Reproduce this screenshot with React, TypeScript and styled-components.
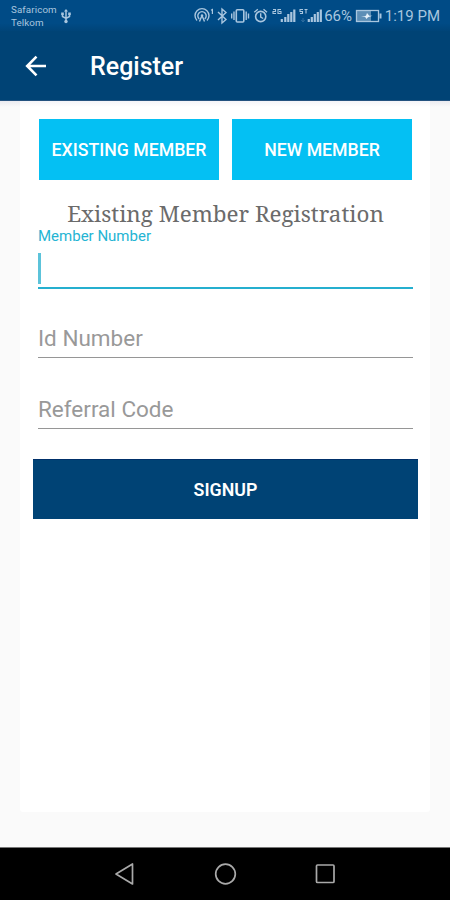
import React from "react";
import styled, { createGlobalStyle } from "styled-components";

const Global = createGlobalStyle`
  * { box-sizing: border-box; }
  body { margin: 0; font-family: Roboto, sans-serif; background: #fafafa; }
  button { border: 0; font-family: inherit; padding: 0; }
`;

const Screen = styled.div`
  width: 450px;
  height: 900px;
  display: flex;
  flex-direction: column;
  background: #fafafa;
  overflow: hidden;
`;

const StatusBar = styled.div`
  height: 31px;
  flex: none;
  display: flex;
  justify-content: space-between;
  padding: 0 10px 0 11px;
  background: linear-gradient(#004b86 75%, #004478);
  color: #a9c6df;
`;

const Carrier = styled.div`
  display: flex;
  align-items: center;
  gap: 4px;
  padding-top: 1px;
`;

const CarrierNames = styled.div`
  font-size: 9.8px;
  line-height: 13px;
  letter-spacing: 0.1px;
  white-space: nowrap;
`;

const Indicators = styled.div`
  display: flex;
  align-items: center;
  height: 32px;
`;

const StatusText = styled.span<{ $width: number }>`
  width: ${(p) => p.$width}px;
  font-size: 15px;
  line-height: 18px;
  white-space: nowrap;
  text-align: right;
`;

const Toolbar = styled.header`
  height: 70px;
  flex: none;
  display: flex;
  align-items: center;
  gap: 41px;
  padding: 0 24px 0 23px;
  background: #004375;
  color: #fff;
  border-bottom: 1px solid #24527f;
`;

const BackIcon = styled.svg`
  width: 26px;
  height: 26px;
`;

const Title = styled.h1`
  margin: 2px 0 0;
  font-size: 25px;
  font-weight: 500;
  line-height: 30px;
`;

const Body = styled.main`
  flex: 1;
  padding: 0 20px 35px;
  background: linear-gradient(#ebebf0, #fafafa 6px);
`;

const Card = styled.section`
  height: 100%;
  padding: 18px 13px 0;
  border-radius: 0 0 3px 3px;
  background: linear-gradient(#f4f4f8, #fff 6px);
`;

const Tabs = styled.div`
  display: grid;
  grid-template-columns: 180px 180px;
  gap: 13px;
  padding-left: 6px;
`;

const Tab = styled.button`
  height: 61px;
  background: #04c0f3;
  color: #fff;
  font-size: 17.7px;
  font-weight: 500;
`;

const Heading = styled.h2`
  margin: 19px 0 0 1px;
  height: 29px;
  color: #6b6b6b;
  font-family: "Noto Serif", "Droid Serif", "DejaVu Serif Condensed", "DejaVu Serif", serif;
  font-size: 22.4px;
  font-weight: 400;
  line-height: 30px;
  text-align: center;
  white-space: nowrap;
`;

const ActiveField = styled.label`
  display: block;
  height: 61px;
  margin: 0 4px 0 5px;
  border-bottom: 2px solid #25afcf;
`;

const FieldLabel = styled.span`
  display: block;
  color: #25b4d3;
  font-size: 15px;
  line-height: 16px;
`;

const Caret = styled.span`
  display: block;
  width: 3px;
  height: 31px;
  margin: 9px 0 0;
  background: #5cc3da;
`;

const Field = styled.label<{ $gap: number }>`
  display: flex;
  align-items: center;
  height: 40px;
  margin: ${(p) => p.$gap}px 4px 0 5px;
  padding-top: 1px;
  border-bottom: 1px solid #969696;
  color: #999;
  font-size: 22.5px;
`;

const Submit = styled.button`
  display: block;
  width: 385px;
  height: 60px;
  margin-top: 30px;
  border-top: 1px solid #00306a;
  background: #004375;
  color: #fff;
  font-size: 17.8px;
  font-weight: 600;
`;

const NavBar = styled.nav`
  height: 53px;
  flex: none;
  display: flex;
  justify-content: center;
  gap: 76px;
  padding-top: 14px;
  background: #000;
  border-top: 1px solid #777;
`;

const NavIcon = styled.svg`
  width: 24px;
  height: 24px;
  fill: none;
  stroke: #a9a9a9;
  stroke-width: 1.7;
`;

const UsbIcon = () => (
  <svg width="10" height="16" viewBox="0 0 10 16" fill="none" stroke="currentColor" strokeWidth="1.5">
    <path d="M5 2v11M1.5 6v2.5L5 10.5l3.5-2V6" />
    <path d="M3 3.5L5 1l2 2.5z" fill="currentColor" stroke="none" />
    <rect x="0.2" y="4.5" width="2.6" height="2.6" fill="currentColor" stroke="none" />
    <rect x="7.2" y="4.5" width="2.6" height="2.6" fill="currentColor" stroke="none" />
    <circle cx="5" cy="13.5" r="1.7" fill="currentColor" stroke="none" />
  </svg>
);

const StatusIcons = () => (
  <svg width="130" height="20" viewBox="193 6 130 20" fill="none" stroke="currentColor" strokeWidth="1.4">
    <path d="M197 20.5a7 7 0 1 1 10 0M199.3 19a4.2 4.2 0 1 1 5.4 0" />
    <path d="M202 15.5l-2.5 6M202 15.5l2.5 6" />
    <circle cx="202" cy="15.5" r="1.2" fill="currentColor" stroke="none" />
    <path d="M211 10.3l1.4-.8v4.5" strokeWidth="1.2" />
    <path d="M218 12l8 7.5-4 3.5V9l4 3.5-8 7.5" />
    <rect x="236.3" y="9.7" width="7.5" height="12.3" rx="1" strokeWidth="1.6" />
    <path d="M234 11.5v8.5M231.7 13.5v5M246.2 11.5v8.5M248.5 13.5v5" />
    <circle cx="260.7" cy="16.5" r="5.1" strokeWidth="1.6" />
    <path d="M260.7 13.2v3.8l2.5 1.5M254.3 12.3l3.5-3M267 12.3l-3.5-3" />
    <path d="M273 9.5h2.5v2H273v2h3M281 9.5h-3v4h3v-2h-2" strokeWidth="1.1" />
    <path d="M281.8 22v-3M285.3 22v-5M288.3 22v-8M291.3 22v-10M294.3 22V9.5" strokeWidth="2.2" />
    <path d="M303 9.5h-3v2h2.5v2H300M304.5 9.5h3M306 9.5v4" strokeWidth="1.1" />
    <path d="M303 18v3M301.3 20l1.7 2 1.7-2" strokeWidth=".7" opacity=".4" />
    <path d="M308.8 22v-3M311.8 22v-5M314.8 22v-8M317.8 22v-10M320.8 22V9.5" strokeWidth="2.2" />
  </svg>
);

const BatteryIcon = styled.svg`
  width: 28px;
  height: 14px;
  margin-left: 3px;
`;

export default function App() {
  return (
    <Screen>
      <Global />
      <StatusBar>
        <Carrier>
          <CarrierNames>
            <div>Safaricom</div>
            <div>Telkom</div>
          </CarrierNames>
          <UsbIcon />
        </Carrier>
        <Indicators>
          <StatusIcons />
          <StatusText $width={29}>66%</StatusText>
          <BatteryIcon viewBox="0 0 28 14" fill="none" stroke="currentColor" strokeWidth="1.3">
            <rect x="1.5" y="1.5" width="22" height="11" />
            <path d="M2 2h14v10H2z" fill="currentColor" stroke="none" opacity=".55" />
            <path d="M25.5 4.5v5" strokeWidth="2" />
            <path d="M6 7.7l5-1L12 4l2.3 2.8h3.2L13 8.3 11.5 10 10 7.7z" fill="#e6f1fa" stroke="none" />
          </BatteryIcon>
          <StatusText $width={57}>1:19 PM</StatusText>
        </Indicators>
      </StatusBar>
      <Toolbar>
        <BackIcon viewBox="0 0 26 26" fill="none" stroke="currentColor" strokeWidth="2.6">
          <path d="M23 13H4.5M13.5 3.7L4.2 13l9.3 9.3" />
        </BackIcon>
        <Title>Register</Title>
      </Toolbar>
      <Body>
        <Card>
          <Tabs>
            <Tab>EXISTING MEMBER</Tab>
            <Tab>NEW MEMBER</Tab>
          </Tabs>
          <Heading>Existing Member Registration</Heading>
          <ActiveField>
            <FieldLabel>Member Number</FieldLabel>
            <Caret />
          </ActiveField>
          <Field $gap={29}>Id Number</Field>
          <Field $gap={31}>Referral Code</Field>
          <Submit>SIGNUP</Submit>
        </Card>
      </Body>
      <NavBar>
        <NavIcon viewBox="0 0 24 24"><path d="M19.5 2v20L3 12z" strokeLinejoin="round" /></NavIcon>
        <NavIcon viewBox="0 0 24 24"><circle cx="12.5" cy="12" r="9.8" /></NavIcon>
        <NavIcon viewBox="0 0 24 24"><rect x="3.5" y="3" width="17.5" height="17.5" rx="1" /></NavIcon>
      </NavBar>
    </Screen>
  );
}
